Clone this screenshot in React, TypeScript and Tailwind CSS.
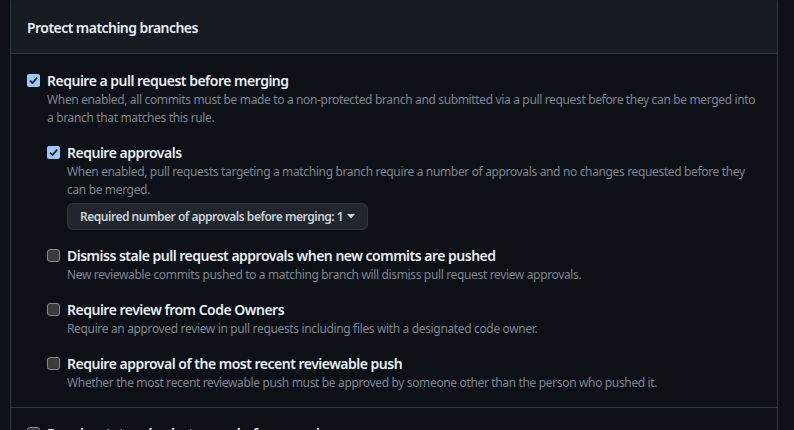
import React from "react";

function Check({ checked }: { checked?: boolean }) {
  if (checked) {
    return (
      <span className="mt-[3px] flex h-[13px] w-[13px] shrink-0 items-center justify-center rounded-[2px] bg-[#99c8ff]">
        <svg width="11" height="11" viewBox="0 0 11 11">
          <path d="M2 5.6 L4.4 8 L9.2 2.6" fill="none" stroke="#1b1b1b" strokeWidth="1.7" />
        </svg>
      </span>
    );
  }
  return (
    <span className="mt-[3px] block h-[13px] w-[13px] shrink-0 rounded-[3px] border border-[#858585] bg-[#3b3b3b]" />
  );
}

function Item({
  checked,
  title,
  desc,
  descClass,
  children,
}: {
  checked?: boolean;
  title: string;
  desc?: React.ReactNode;
  descClass?: string;
  children?: React.ReactNode;
}) {
  return (
    <div className="flex gap-[7px]">
      <Check checked={checked} />
      <div className="min-w-0 flex-1">
        <div className="text-[14px] font-semibold leading-[20px] tracking-[-0.5px] text-[#e6edf3]">{title}</div>
        {desc && (
          <div className={"text-[12px] leading-[18px] tracking-[-0.35px] text-[#7d8590] " + (descClass ?? "")}>
            {desc}
          </div>
        )}
        {children}
      </div>
    </div>
  );
}

export default function App() {
  return (
    <div
      className="h-[430px] w-[794px] overflow-hidden bg-[#0d1117] pl-[10px] pr-[16px]"
      style={{ fontFamily: '"Segoe UI", "Noto Sans", sans-serif' }}
    >
      <div className="-mt-[4px] rounded-t-[6px] border border-[#30363d]">
        <div className="flex h-[57px] items-center rounded-t-[6px] border-b border-[#30363d] bg-[#161b22] px-[16px] pt-[4px]">
          <h3 className="text-[14px] font-semibold tracking-[-0.55px] text-[#e6edf3]">Protect matching branches</h3>
        </div>
        <div className="border-b border-[#30363d] px-[16px] pb-[15px] pt-[17px]">
          <Item
            checked
            title="Require a pull request before merging"
            desc="When enabled, all commits must be made to a non-protected branch and submitted via a pull request before they can be merged into a branch that matches this rule."
          >
            <div className="mt-[16px] flex flex-col gap-[16px]">
              <Item
                checked
                title="Require approvals"
                descClass="max-w-[680px]"
                desc="When enabled, pull requests targeting a matching branch require a number of approvals and no changes requested before they can be merged."
              >
                <button className="mt-[4px] flex h-[27px] items-center gap-[4px] rounded-[6px] border border-[#30363d] bg-[#21262d] px-[12px] text-[12px] font-semibold tracking-[-0.48px] text-[#c9d1d9]">
                  <span>Required number of approvals before merging: 1</span>
                  <svg width="8" height="5" viewBox="0 0 8 5">
                    <path d="M0 0 L8 0 L4 4.5 Z" fill="#c9d1d9" />
                  </svg>
                </button>
              </Item>
              <Item
                title="Dismiss stale pull request approvals when new commits are pushed"
                desc="New reviewable commits pushed to a matching branch will dismiss pull request review approvals."
              />
              <Item
                title="Require review from Code Owners"
                desc="Require an approved review in pull requests including files with a designated code owner."
              />
              <Item
                title="Require approval of the most recent reviewable push"
                desc="Whether the most recent reviewable push must be approved by someone other than the person who pushed it."
              />
            </div>
          </Item>
        </div>
        <div className="px-[16px] pt-[16px] pb-[16px]">
          <Item
            title="Require status checks to pass before merging"
            desc="Choose which status checks must pass before branches can be merged into a branch that matches this rule."
          />
        </div>
      </div>
    </div>
  );
}
